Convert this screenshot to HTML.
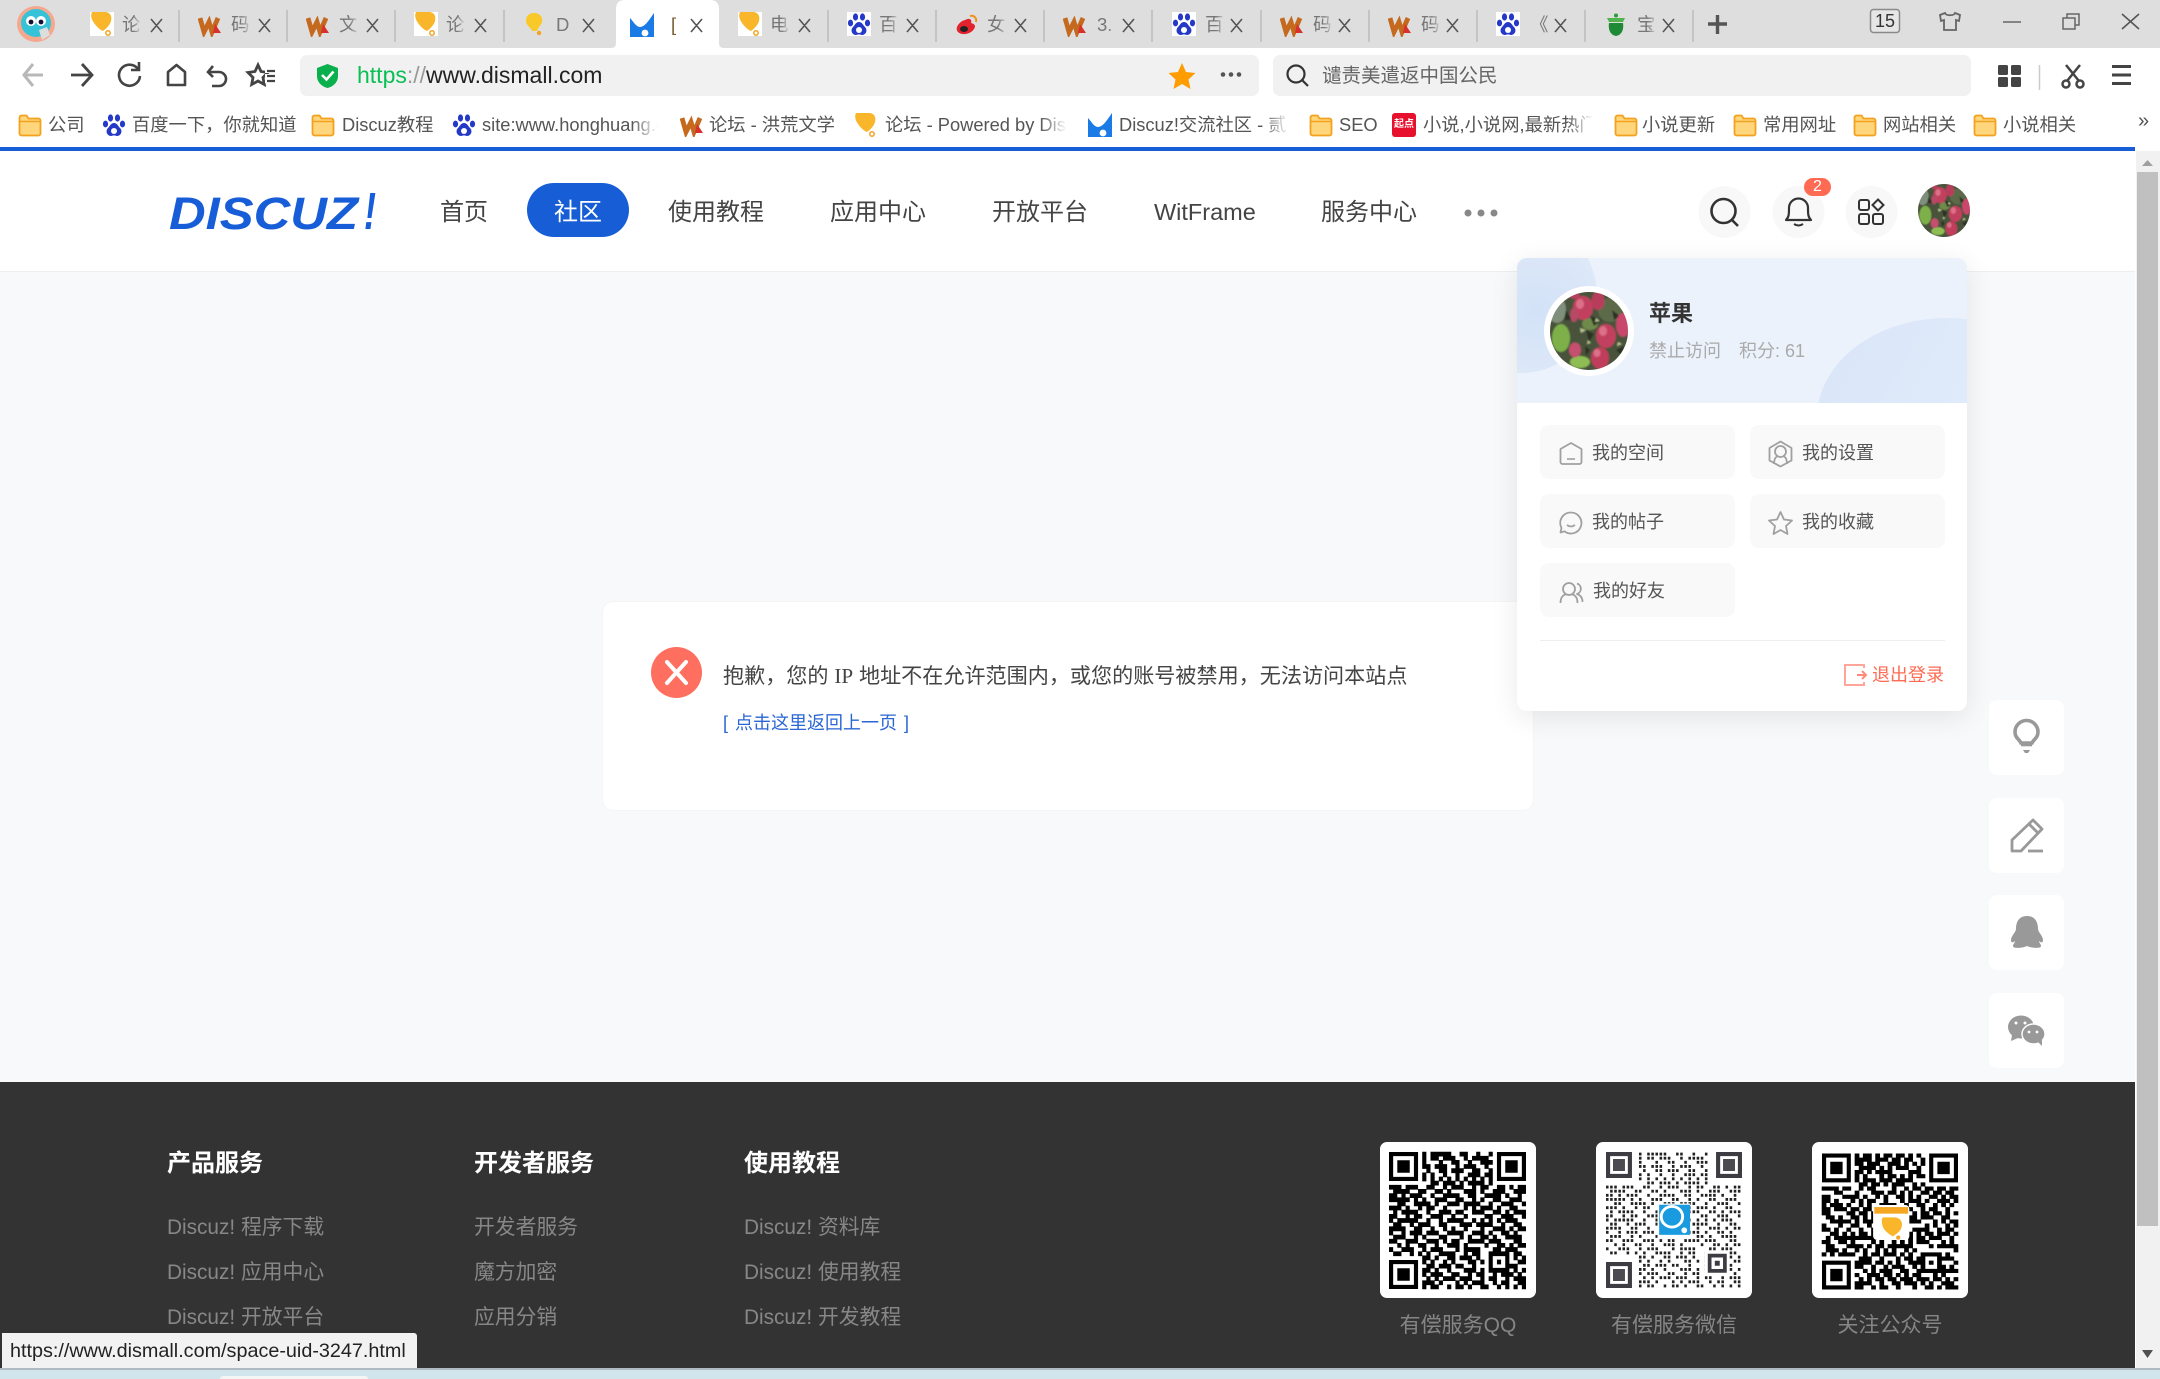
<!DOCTYPE html>
<html lang="zh-CN"><head><meta charset="utf-8"><title>Discuz!</title>
<style>
html,body{margin:0;padding:0;width:2160px;height:1379px;overflow:hidden;background:#fff}
body{position:relative;font-family:"Liberation Sans","Noto Sans CJK SC",sans-serif;color:#444}
.a{position:absolute;white-space:nowrap;line-height:30px;height:30px}
.b{position:absolute}
svg.b{overflow:visible}
svg.b.c{overflow:hidden;border-radius:50%}
.tt{font-size:18.500px;color:#777;width:20px;overflow:hidden;-webkit-mask-image:linear-gradient(90deg,#000 55%,transparent);mask-image:linear-gradient(90deg,#000 55%,transparent)}
.bm{font-size:18.300px;color:#555;top:110px}
.fade{overflow:hidden;-webkit-mask-image:linear-gradient(90deg,#000 85%,transparent);mask-image:linear-gradient(90deg,#000 85%,transparent)}
.nav{font-size:24px;top:198px;color:#444}
.btn{position:absolute;width:195px;height:54px;background:#f9f9f9;border-radius:9px}
.bt{font-size:18px;color:#555}
.ft{font-size:24px;font-weight:700;color:#fff;top:1149px}
.fl{font-size:20.800px;color:#878787}
.side{position:absolute;left:1989px;width:75px;height:75px;background:#fff;border-radius:8px}
.qr{position:absolute;top:1142px;width:156px;height:156px;background:#fff;border-radius:7px}
.cap{font-size:21px;color:#858585;top:1311px;width:156px;text-align:center}
</style></head><body>
<svg width="0" height="0" style="position:absolute">
<defs>
<filter id="soft" x="-5%" y="-5%" width="110%" height="110%"><feGaussianBlur stdDeviation=".7"/></filter>
<symbol id="i-bulb" viewBox="0 0 24 24"><rect width="24" height="24" fill="#fff"/><path d="M2 0h14c5 1 6 5 5 9-1 4-5 8-8 10-3-1-7-5-9-8C2 8 0 4 2 0z" fill="#f9b62a"/><circle cx="18" cy="21" r="2.2" fill="none" stroke="#f3a322" stroke-width="1.5"/></symbol>
<symbol id="i-bulb2" viewBox="0 0 24 24"><path d="M12 1c6 0 9 4 8 9-1 4-4 5-5 9h-5C9 15 4 14 4 9c0-5 3-8 8-8z" fill="#f9c92a"/><circle cx="17" cy="21" r="2.2" fill="#f3a322"/></symbol>
<symbol id="i-w" viewBox="0 0 24 24"><path d="M2 5l4 14 5-10 3 10 6-14" fill="none" stroke="#c4691e" stroke-width="4.800"/><path d="M17 11l6 9h-8z" fill="#d8302a"/></symbol>
<symbol id="i-bd" viewBox="0 0 24 24"><rect width="24" height="24" fill="#fff"/><g fill="#2539c8"><ellipse cx="8.5" cy="5" rx="2.6" ry="3.6"/><ellipse cx="15.5" cy="5" rx="2.6" ry="3.6"/><ellipse cx="3.5" cy="11" rx="2.6" ry="3.4"/><ellipse cx="20.5" cy="11" rx="2.6" ry="3.4"/><path d="M12 10c3 0 4 3 6 5 3 3 1 8-3 8-1 0-2-.6-3-.6s-2 .6-3 .6c-4 0-6-5-3-8 2-2 3-5 6-5z"/></g><circle cx="12" cy="18" r="3" fill="#fff"/></symbol>
<symbol id="i-dz" viewBox="0 0 24 24"><path d="M0 24V5c3 3 6 9 10 9 5 0 9-7 14-14v24z" fill="#1b7be6"/><circle cx="15" cy="20" r="3.4" fill="#fff"/></symbol>
<symbol id="i-wb" viewBox="0 0 24 24"><path d="M10 7c6-3 7 1 6 3 4 1 5 3 3 6-3 5-12 7-16 3C-1 15 5 8 10 7z" fill="#e2232e"/><ellipse cx="9" cy="16" rx="4" ry="3" fill="#222"/><path d="M15 3c4-1 7 2 6 6" fill="none" stroke="#f09020" stroke-width="2"/></symbol>
<symbol id="i-gr" viewBox="0 0 24 24"><circle cx="12" cy="3.5" r="2" fill="#2a9a3c"/><path d="M3 6h18l-2 4H5z" fill="#4fb34f"/><path d="M5 11h14c1 6-1 12-7 13-6-1-8-7-7-13z" fill="#1f8a34"/></symbol>
<symbol id="i-f" viewBox="0 0 24 24"><path d="M1.5 4.5a2 2 0 0 1 2-2h5l2 3h10a2 2 0 0 1 2 2v13a2 2 0 0 1-2 2h-17a2 2 0 0 1-2-2z" fill="#ffd67c" stroke="#f2a21e" stroke-width="1.8"/><path d="M1.5 8.5h21" stroke="#f2a21e" stroke-width="1.6"/></symbol>
<symbol id="i-ap" viewBox="10 12 78 78"><g filter="url(#soft)">
<rect x="0" y="0" width="100" height="100" fill="#49523a"/>
<ellipse cx="17" cy="30" rx="9" ry="13" fill="#7f8f7c"/><ellipse cx="70" cy="30" rx="12" ry="12" fill="#5d6b48"/>
<ellipse cx="21" cy="58" rx="9" ry="14" fill="#7db04a"/><ellipse cx="40" cy="82" rx="10" ry="6" fill="#8dbd52"/><ellipse cx="50" cy="44" rx="8" ry="6" fill="#6f8a4c"/>
<path d="M50 36l12 4-8 6zM46 50l8 4-5 8zM26 30l6 10-8 0zM72 30l8 6-6 4zM76 70l8-4-2 10zM45 66l5 4-4 6z" fill="#2c3224"/>
<path d="M56 38l4 3-5 1zM40 48l6 2-5 3zM78 62l4 2-5 2zM48 60l3 3-4 1z" fill="#b7c58f"/>
<ellipse cx="43" cy="28" rx="10" ry="12" fill="#c2415f"/><ellipse cx="58" cy="21" rx="6.500" ry="9" fill="#b83d5c"/><ellipse cx="83" cy="45" rx="7" ry="12" fill="#c8466a"/><ellipse cx="66" cy="56" rx="10" ry="12" fill="#c23f5e"/><ellipse cx="60" cy="78" rx="9" ry="11" fill="#c03c5c"/><ellipse cx="35" cy="70" rx="6" ry="7.5" fill="#c5506e"/><ellipse cx="34" cy="35" rx="4" ry="7" fill="#b54a66"/><ellipse cx="35" cy="16" rx="5" ry="3" fill="#b8405e"/>
<ellipse cx="40" cy="24" rx="4" ry="5" fill="#dc6f88"/><ellipse cx="63" cy="51" rx="4" ry="5" fill="#dc6f88"/><ellipse cx="57" cy="73" rx="3.500" ry="4" fill="#dc6f88"/></g></symbol>
<path id="qd" fill="none" d="M8 .5h1M10 .5h5M17 .5h2M21 .5h1M24 .5h1M8 1.5h1M10 1.5h2M13 1.5h3M18 1.5h1M20 1.5h4M8 2.5h1M12 2.5h1M15 2.5h2M19 2.5h1M22 2.5h3M8 3.5h2M11 3.5h3M16 3.5h1M18 3.5h3M23 3.5h1M9 4.5h1M12 4.5h2M15 4.5h3M20 4.5h2M24 4.5h1M8 5.5h1M10 5.5h1M13 5.5h1M16 5.5h1M19 5.5h3M23 5.5h2M8 6.5h1M10 6.5h1M12 6.5h1M14 6.5h1M16 6.5h1M18 6.5h1M20 6.5h1M22 6.5h1M24 6.5h1M10 7.5h2M13 7.5h3M17 7.5h1M19 7.5h4M24 7.5h1M0 8.5h3M4 8.5h2M6 8.5h1M9 8.5h2M13 8.5h1M15 8.5h3M20 8.5h1M22 8.5h2M26 8.5h2M29 8.5h1M31 8.5h2M1 9.5h4M7 9.5h2M11 9.5h2M14 9.5h1M18 9.5h3M22 9.5h1M25 9.5h3M30 9.5h3M0 10.5h2M3 10.5h1M5 10.5h3M10 10.5h1M13 10.5h4M19 10.5h2M23 10.5h4M28 10.5h1M31 10.5h1M0 11.5h5M6 11.5h1M8 11.5h1M11 11.5h3M16 11.5h2M20 11.5h1M22 11.5h1M25 11.5h2M29 11.5h3M2 12.5h2M6 12.5h4M11 12.5h1M14 12.5h3M18 12.5h4M24 12.5h1M27 12.5h3M32 12.5h1M0 13.5h3M4 13.5h1M7 13.5h1M9 13.5h2M13 13.5h1M18 13.5h1M20 13.5h1M22 13.5h3M26 13.5h1M29 13.5h2M1 14.5h1M3 14.5h4M9 14.5h1M12 14.5h3M16 14.5h2M20 14.5h3M25 14.5h2M28 14.5h1M30 14.5h3M0 15.5h2M4 15.5h1M6 15.5h2M10 15.5h3M15 15.5h1M18 15.5h1M23 15.5h2M27 15.5h3M32 15.5h1M0 16.5h1M2 16.5h5M9 16.5h1M12 16.5h1M14 16.5h4M20 16.5h1M22 16.5h1M24 16.5h1M26 16.5h1M28 16.5h3M1 17.5h2M5 17.5h1M7 17.5h3M12 17.5h2M17 17.5h3M21 17.5h4M27 17.5h1M30 17.5h2M0 18.5h4M6 18.5h2M10 18.5h1M13 18.5h1M15 18.5h1M18 18.5h1M22 18.5h1M25 18.5h3M29 18.5h1M31 18.5h2M0 19.5h1M3 19.5h1M5 19.5h3M9 19.5h3M14 19.5h4M20 19.5h3M24 19.5h1M27 19.5h2M30 19.5h1M1 20.5h3M6 20.5h1M8 20.5h1M12 20.5h2M17 20.5h1M19 20.5h1M22 20.5h2M25 20.5h1M28 20.5h4M0 21.5h2M4 21.5h3M9 21.5h3M13 21.5h1M15 21.5h2M19 21.5h4M24 21.5h3M30 21.5h2M2 22.5h1M4 22.5h1M7 22.5h2M11 22.5h1M14 22.5h3M18 22.5h1M23 22.5h1M26 22.5h2M29 22.5h1M31 22.5h2M0 23.5h1M3 23.5h3M8 23.5h1M10 23.5h3M16 23.5h1M18 23.5h4M25 23.5h2M28 23.5h3M1 24.5h2M5 24.5h1M7 24.5h1M9 24.5h1M12 24.5h4M18 24.5h1M20 24.5h2M24 24.5h5M30 24.5h2M8 25.5h2M11 25.5h1M14 25.5h2M17 25.5h3M21 25.5h1M24 25.5h1M28 25.5h1M30 25.5h1M32 25.5h1M8 26.5h1M10 26.5h1M13 26.5h1M15 26.5h1M19 26.5h2M22 26.5h1M24 26.5h1M26 26.5h1M28 26.5h1M31 26.5h2M9 27.5h2M12 27.5h3M16 27.5h2M20 27.5h1M24 27.5h1M28 27.5h3M8 28.5h2M11 28.5h1M14 28.5h1M18 28.5h3M22 28.5h1M24 28.5h5M30 28.5h1M32 28.5h1M8 29.5h1M10 29.5h3M15 29.5h2M19 29.5h1M21 29.5h2M25 29.5h1M27 29.5h3M31 29.5h1M9 30.5h1M11 30.5h1M13 30.5h3M17 30.5h3M22 30.5h1M24 30.5h2M28 30.5h1M30 30.5h3M8 31.5h3M12 31.5h1M16 31.5h1M18 31.5h1M20 31.5h3M25 31.5h1M27 31.5h2M31 31.5h2M8 32.5h1M10 32.5h2M14 32.5h1M16 32.5h2M19 32.5h1M22 32.5h2M26 32.5h1M28 32.5h1M30 32.5h1M32 32.5h1"/>
<path id="qf" fill-rule="evenodd" d="M0 0h7v7H0zM1 1v5h5V1zM2 2h3v3H2zM26 0h7v7h-7zM27 1v5h5V1zM28 2h3v3h-3zM0 26h7v7H0zM1 27v5h5v-5zM2 28h3v3H2z"/>
</defs></svg>

<!-- tab bar -->
<div class="b" style="left:0;top:0;width:2160px;height:48px;background:#dedede"></div>
<svg class="b" style="left:0;top:0" width="2160" height="48">
<ellipse cx="36" cy="24" rx="19" ry="18" fill="#f4a88e"/><ellipse cx="36" cy="23" rx="15" ry="14" fill="#36c3d8"/><circle cx="31" cy="21" r="5" fill="#fff"/><circle cx="41" cy="21" r="5" fill="#fff"/><circle cx="31" cy="22" r="2.4" fill="#113"/><circle cx="41" cy="22" r="2.4" fill="#113"/><path d="M39 30l8-3 3 8-8 5z" fill="#ddd"/>
<g stroke="#b9b9b9" stroke-width="1.4"><path d="M179 10v32M287 10v32M395 10v32M504 10v32M828 10v32M936 10v32M1044 10v32M1152 10v32M1261 10v32M1369 10v32M1477 10v32M1585 10v32M1693 10v32"/></g>
<path d="M611 48c4 0 5-2 5-6V9c0-6 3-9 9-9h85c6 0 9 3 9 9v33c0 4 1 6 5 6z" fill="#fff"/>
<use href="#i-bulb" x="90" y="12" width="24" height="24"/>
<use href="#i-w" x="198" y="13" width="24" height="24"/>
<use href="#i-w" x="306" y="13" width="24" height="24"/>
<use href="#i-bulb" x="414" y="12" width="24" height="24"/>
<use href="#i-bulb2" x="522" y="12" width="24" height="24"/>
<use href="#i-dz" x="630" y="13" width="24" height="24"/>
<use href="#i-bulb" x="738" y="12" width="24" height="24"/>
<use href="#i-bd" x="847" y="12" width="24" height="24"/>
<use href="#i-wb" x="955" y="13" width="24" height="24"/>
<use href="#i-w" x="1063" y="13" width="24" height="24"/>
<use href="#i-bd" x="1172" y="12" width="24" height="24"/>
<use href="#i-w" x="1280" y="13" width="24" height="24"/>
<use href="#i-w" x="1388" y="13" width="24" height="24"/>
<use href="#i-bd" x="1496" y="12" width="24" height="24"/>
<use href="#i-gr" x="1604" y="12" width="24" height="24"/>
<g stroke="#555" stroke-width="1.6" fill="none">
<path d="M151 19l11 13m0-13l-11 13M259 19l11 13m0-13l-11 13M367 19l11 13m0-13l-11 13M475 19l11 13m0-13l-11 13M583 19l11 13m0-13l-11 13M691 19l11 13m0-13l-11 13M799 19l11 13m0-13l-11 13M907 19l11 13m0-13l-11 13M1015 19l11 13m0-13l-11 13M1123 19l11 13m0-13l-11 13M1231 19l11 13m0-13l-11 13M1339 19l11 13m0-13l-11 13M1447 19l11 13m0-13l-11 13M1555 19l11 13m0-13l-11 13M1663 19l11 13m0-13l-11 13"/>
</g>
<path d="M1708 24h19M1717.500 15v19" stroke="#555" stroke-width="3.4"/>
<rect x="1870.500" y="9.500" width="29" height="23" rx="3" fill="#e6e6e6" stroke="#8a8a8a" stroke-width="1.5"/>
<path d="M1945 13l-5 2 1 6 3-1v10h12V20l3 1 1-6-5-2c-1 3-9 3-10 0z" fill="none" stroke="#666" stroke-width="1.8"/>
<path d="M2003 22h18" stroke="#666" stroke-width="1.5"/>
<path d="M2063 18h12v11h-12zM2067 18v-4h12v11h-4" fill="none" stroke="#666" stroke-width="1.5"/>
<path d="M2122 14l17 15m0-15l-17 15" stroke="#555" stroke-width="1.6"/>
</svg>
<span class="a" style="left:1875px;top:6px;font-size:18px;color:#333">15</span>
<span class="a tt" style="left:122px;top:10px">论</span><span class="a tt" style="left:231px;top:10px">码</span><span class="a tt" style="left:339px;top:10px">文</span><span class="a tt" style="left:446px;top:10px">论</span><span class="a tt" style="left:556px;top:10px">D</span><span class="a tt" style="left:671px;top:10px;color:#7a5a30">[</span><span class="a tt" style="left:770px;top:10px">电</span><span class="a tt" style="left:879px;top:10px">百</span><span class="a tt" style="left:987px;top:10px">女</span><span class="a tt" style="left:1097px;top:10px">3.</span><span class="a tt" style="left:1205px;top:10px">百</span><span class="a tt" style="left:1313px;top:10px">码</span><span class="a tt" style="left:1421px;top:10px">码</span><span class="a tt" style="left:1530px;top:10px;-webkit-mask-image:none;mask-image:none">《</span><span class="a tt" style="left:1637px;top:10px">宝</span>

<!-- toolbar -->
<div class="b" style="left:300px;top:55px;width:959px;height:41px;background:#f1f1f1;border-radius:7px"></div>
<div class="b" style="left:1273px;top:55px;width:698px;height:41px;background:#f1f1f1;border-radius:7px"></div>
<svg class="b" style="left:0;top:0" width="2160" height="146">
<path d="M33 64l-9 11 9 11M24 75h19" fill="none" stroke="#b8b8b8" stroke-width="3"/>
<path d="M82 64l10 11-10 11M71 75h21" fill="none" stroke="#444" stroke-width="2.800"/>
<path d="M138 69a10.500 10.500 0 1 0 2 7M139 62v8h-8" fill="none" stroke="#444" stroke-width="2.600"/>
<path d="M168 85V72l8.500-7 8.500 7v13z" fill="none" stroke="#444" stroke-width="2.600" stroke-linejoin="round"/>
<path d="M213 66l-5 6 5 5M208 72h11a7 7 0 0 1 0 14h-7" fill="none" stroke="#444" stroke-width="2.600"/>
<path d="M258 65l3 6.500 7 1-5 5 1.300 7-6.300-3.500-6.300 3.500 1.300-7-5-5 7-1z" fill="#fff" stroke="#444" stroke-width="2.800"/><path d="M265 71h10M265 76h10M265 81h10" stroke="#fff" stroke-width="4"/><path d="M267 71h8M267 76h8M267 81h8" stroke="#444" stroke-width="2.300"/>
<path d="M317 68l10.500-4 10.500 4v8c0 7-6 11-10.500 12-4.500-1-10.500-5-10.500-12z" fill="#0ab04b"/><path d="M322 75l4.500 4.500 7-8" fill="none" stroke="#fff" stroke-width="2.600"/>
<path d="M1182 63l4 9 9.500 1-7 6.500 2 9.500-8.500-5-8.500 5 2-9.500-7-6.500 9.500-1z" fill="#ff9c00"/>
<g fill="#555"><circle cx="1223" cy="74.500" r="2.300"/><circle cx="1231" cy="74.500" r="2.300"/><circle cx="1239" cy="74.500" r="2.300"/></g>
<circle cx="1296" cy="74" r="8.500" fill="none" stroke="#333" stroke-width="2.200"/><path d="M1302 80l6 6" stroke="#333" stroke-width="2.200"/>
<g fill="#444"><rect x="1998" y="65" width="10" height="10" rx="1.500"/><rect x="2011" y="65" width="10" height="10" rx="1.500"/><rect x="1998" y="77" width="10" height="10" rx="1.500"/><rect x="2011" y="77" width="10" height="10" rx="1.500"/></g>
<path d="M2039.500 65v25" stroke="#ccc" stroke-width="1.500"/>
<path d="M2066 65l13 16M2080 65l-13 16" stroke="#444" stroke-width="2.500"/><circle cx="2066" cy="84" r="3.500" fill="none" stroke="#444" stroke-width="2.500"/><circle cx="2080" cy="84" r="3.500" fill="none" stroke="#444" stroke-width="2.500"/>
<path d="M2112 66.500h19M2112 75h19M2112 83.500h19" stroke="#444" stroke-width="3"/>
<!-- bookmark icons -->
<use href="#i-f" x="18" y="113" width="24" height="24"/>
<use href="#i-bd" x="102" y="113" width="24" height="24"/>
<use href="#i-f" x="311" y="113" width="24" height="24"/>
<use href="#i-bd" x="452" y="113" width="24" height="24"/>
<use href="#i-w" x="680" y="113" width="24" height="24"/>
<use href="#i-bulb" x="854" y="113" width="24" height="24"/>
<use href="#i-dz" x="1088" y="113" width="24" height="24"/>
<use href="#i-f" x="1309" y="113" width="24" height="24"/>
<rect x="1392" y="113" width="24" height="24" rx="3" fill="#e8112d"/>
<use href="#i-f" x="1614" y="113" width="24" height="24"/>
<use href="#i-f" x="1733" y="113" width="24" height="24"/>
<use href="#i-f" x="1853" y="113" width="24" height="24"/>
<use href="#i-f" x="1973" y="113" width="24" height="24"/>
</svg>
<span class="a" style="left:357px;top:60px;font-size:23px;color:#222"><span style="color:#0abf53">https</span><span style="color:#999">://</span>www.dismall.com</span>
<span class="a" style="left:1322px;top:61px;font-size:19.500px;color:#666">谴责美遣返中国公民</span>
<span class="a bm" style="left:48px">公司</span>
<span class="a bm" style="left:132px">百度一下，你就知道</span>
<span class="a bm" style="left:342px">Discuz教程</span>
<span class="a bm fade" style="left:482px;width:176px">site:www.honghuang.com</span>
<span class="a bm" style="left:709px">论坛 - 洪荒文学</span>
<span class="a bm fade" style="left:885px;width:182px">论坛 - Powered by Discuz!</span>
<span class="a bm fade" style="left:1119px;width:170px">Discuz!交流社区 - 贰零</span>
<span class="a bm" style="left:1339px">SEO</span>
<span class="a" style="left:1394px;top:110px;font-size:10px;color:#fff;font-weight:700">起点</span>
<span class="a bm fade" style="left:1423px;width:170px">小说,小说网,最新热门小说</span>
<span class="a bm" style="left:1642px">小说更新</span>
<span class="a bm" style="left:1763px">常用网址</span>
<span class="a bm" style="left:1883px">网站相关</span>
<span class="a bm" style="left:2003px">小说相关</span>
<span class="a" style="left:2138px;top:106px;font-size:20px;color:#555">»</span>

<div class="b" style="left:0;top:147px;width:2135px;height:4px;background:#175dd6"></div>

<!-- page -->
<div class="b" style="left:0;top:151px;width:2135px;height:120px;background:#fff"></div>
<div class="b" style="left:0;top:271px;width:2135px;height:811px;background:#f8f9fa;border-top:1px solid #eee;box-sizing:border-box"></div>

<!-- logo -->
<svg class="b" style="left:160px;top:180px" width="230" height="60">
<text x="9" y="49" font-family="Liberation Sans" font-weight="700" font-style="italic" font-size="45" fill="#175dd8" textLength="189" lengthAdjust="spacingAndGlyphs">DISCUZ</text>
<text x="204" y="49" font-family="Liberation Sans" font-weight="700" font-style="italic" font-size="52" fill="#175dd8" textLength="12" lengthAdjust="spacingAndGlyphs">!</text>
</svg>

<span class="a nav" style="left:440px">首页</span>
<div class="b" style="left:527px;top:183px;width:102px;height:54px;border-radius:27px;background:#175dd6"></div>
<span class="a nav" style="left:554px;color:#fff">社区</span>
<span class="a nav" style="left:668px">使用教程</span>
<span class="a nav" style="left:830px">应用中心</span>
<span class="a nav" style="left:992px">开放平台</span>
<span class="a nav" style="left:1154px;font-size:23.500px;top:197px">WitFrame</span>
<span class="a nav" style="left:1321px">服务中心</span>

<svg class="b" style="left:0;top:0" width="2160" height="300">
<g fill="#888"><circle cx="1468" cy="213" r="3.500"/><circle cx="1481" cy="213" r="3.500"/><circle cx="1494" cy="213" r="3.500"/></g>
<g fill="#f8f8f8"><circle cx="1724.500" cy="212" r="26"/><circle cx="1798.500" cy="212" r="26"/><circle cx="1871.500" cy="212" r="26"/></g>
<circle cx="1723.500" cy="211" r="12" fill="none" stroke="#333" stroke-width="2.600"/><path d="M1732 220l6 6" stroke="#333" stroke-width="2.600"/>
<path d="M1786 220h25c-3-3-3-6-3-12a9.500 9.500 0 0 0-19 0c0 6 0 9-3 12z" fill="none" stroke="#333" stroke-width="2.200" stroke-linejoin="round"/><path d="M1794 224q4.500 3 9 0" fill="none" stroke="#333" stroke-width="2"/>
<g fill="none" stroke="#333" stroke-width="2"><rect x="1859" y="200" width="10" height="10" rx="2"/><rect x="1859" y="214" width="10" height="10" rx="2"/><rect x="1873" y="214" width="10" height="10" rx="2"/><path d="M1878 199.500l5.500 5.500-5.500 5.500-5.500-5.500z"/></g>
<rect x="1804" y="178" width="27" height="18" rx="9" fill="#ff6a52"/>
</svg>
<svg class="b c" style="left:1918px;top:184px" width="52" height="53"><use href="#i-ap" width="52" height="53"/></svg>
<span class="a" style="left:1813px;top:172px;font-size:16px;color:#fff">2</span>

<!-- error card -->
<div class="b" style="left:603px;top:602px;width:930px;height:208px;background:#fff;border-radius:10px;box-shadow:0 0 2px rgba(0,0,0,.05)"></div>
<svg class="b" style="left:651px;top:647px" width="51" height="51"><circle cx="25.500" cy="25.500" r="25.500" fill="#ff6f5f"/><path d="M16 15l19 21M35 15L16 36" stroke="#fff" stroke-width="4" stroke-linecap="round"/></svg>
<span class="a" style="left:723px;top:661px;font-size:21.100px;color:#444">抱歉，您的 <span style="font-family:'Liberation Serif'">IP</span> 地址不在允许范围内，或您的账号被禁用，无法访问本站点</span>
<span class="a" style="left:723px;top:708px;font-size:18px;color:#2a66d4;word-spacing:2px">[ 点击这里返回上一页 ]</span>

<!-- side buttons -->
<div class="side" style="top:700px"></div><div class="side" style="top:798px"></div><div class="side" style="top:895px"></div><div class="side" style="top:993px"></div>
<svg class="b" style="left:0;top:0" width="2160" height="1080">
<g fill="none" stroke="#999" stroke-width="3.600"><path d="M2021 743c-1-3-6-5-6-11a11.500 11.500 0 0 1 23 0c0 6-5 8-6 11z"/><path d="M2021 744.500h11" /></g><path d="M2023 750h7l-2 3h-3z" fill="#999"/>
<g fill="none" stroke="#999" stroke-width="2.800" stroke-linejoin="round"><path d="M2012 851v-11l21-20 9 9-21 22z"/><path d="M2029 824l9 9" /><path d="M2028 851h15"/></g>
<path d="M2027 916c8 0 11 6 11 13 0 3 5 7 5 11 0 3-2 3-4 1 0 2 2 3 2 5 0 3-10 2-14 0-4 2-14 3-14 0 0-2 2-3 2-5-2 2-4 2-4-1 0-4 5-8 5-11 0-7 3-13 11-13z" fill="#999"/>
<ellipse cx="2021" cy="1027" rx="13" ry="11.500" fill="#999"/><path d="M2012 1035l-1 6 7-3z" fill="#999"/><ellipse cx="2033.500" cy="1034" rx="11.500" ry="10" fill="#999" stroke="#fff" stroke-width="1.400"/><path d="M2038 1042l4 4 0-6z" fill="#999"/>
<g fill="#fff"><circle cx="2016" cy="1023" r="1.500"/><circle cx="2025" cy="1023" r="1.500"/><circle cx="2029" cy="1032" r="1.400"/><circle cx="2037" cy="1032" r="1.400"/></g>
</svg>

<!-- popup -->
<div class="b" style="left:1517px;top:258px;width:450px;height:453px;background:#fff;border-radius:10px;box-shadow:0 6px 28px rgba(0,0,0,.09);overflow:hidden">
<div class="b" style="left:0;top:0;width:450px;height:145px;background:#ebf2fb;overflow:hidden">
<div class="b" style="left:-70px;top:-40px;width:150px;height:155px;border-radius:50%;background:radial-gradient(circle at 60% 60%,#d3e2f7,#e6eefa)"></div>
<div class="b" style="left:300px;top:60px;width:260px;height:200px;border-radius:50%;background:linear-gradient(120deg,#d9e6f8,#e5eefb)"></div>
</div>
</div>
<div class="b" style="left:1544px;top:286px;width:90px;height:90px;border-radius:50%;background:#fff"></div>
<svg class="b c" style="left:1550px;top:292px" width="78" height="78"><use href="#i-ap" width="78" height="78"/></svg>
<span class="a" style="left:1649px;top:299px;font-size:22px;font-weight:700;color:#333">苹果</span>
<span class="a" style="left:1649px;top:336px;font-size:18px;color:#aaa">禁止访问</span>
<span class="a" style="left:1739px;top:336px;font-size:18px;color:#aaa">积分: 61</span>
<div class="btn" style="left:1540px;top:425px"></div><div class="btn" style="left:1750px;top:425px"></div>
<div class="btn" style="left:1540px;top:494px"></div><div class="btn" style="left:1750px;top:494px"></div>
<div class="btn" style="left:1540px;top:563px"></div>
<span class="a bt" style="left:1592px;top:438px">我的空间</span><span class="a bt" style="left:1802px;top:438px">我的设置</span>
<span class="a bt" style="left:1592px;top:507px">我的帖子</span><span class="a bt" style="left:1802px;top:507px">我的收藏</span>
<span class="a bt" style="left:1593px;top:576px">我的好友</span>
<div class="b" style="left:1540px;top:640px;width:405px;height:1px;background:#eee"></div>
<span class="a" style="left:1872px;top:660px;font-size:18px;color:#ff6a52">退出登录</span>
<svg class="b" style="left:0;top:0" width="2160" height="720">
<g fill="none" stroke="#a0a0a0" stroke-width="1.800" stroke-linejoin="round">
<path d="M1560.500 449l10.500-6 10.500 6v13a2 2 0 0 1-2 2h-17a2 2 0 0 1-2-2z"/><path d="M1567 459h8" stroke-width="1.600"/>
<path d="M1780.500 441.500l11 6.500v12.500l-11 6-11-6V448z"/><circle cx="1780.500" cy="451.500" r="5.500"/><path d="M1774 464c0-6 2-7 3-7.500m10 7.500c0-6-2-7-3-7.500"/>
<path d="M1571 512.500a10.500 10.500 0 1 1-6.500 18.800l-4 1.200 1-4.500a10.500 10.500 0 0 1 9.500-15.500z"/><path d="M1567 525q4 3 8 0"/>
<path d="M1780.500 512l3.500 7.500 8 1-6 5.500 1.500 8-7-4-7 4 1.500-8-6-5.500 8-1z"/>
<circle cx="1569" cy="589" r="6"/><path d="M1560.500 603c0-6 3-8 5-8.500m7 0c2 .5 5 2.500 5 8.500M1577 583.500a5.500 5.500 0 0 1 0 10.500c3 1 5.500 3 5.500 8"/>
</g>
<g fill="none" stroke="#ffa599" stroke-width="2"><path d="M1864 668v-3h-19v20h19v-3"/><path d="M1857 675h8m-3-4l4 4-4 4" stroke="#ff8a7a"/></g>
</svg>

<!-- footer -->
<div class="b" style="left:0;top:1082px;width:2135px;height:286px;background:#333"></div>
<span class="a ft" style="left:167px">产品服务</span><span class="a ft" style="left:474px">开发者服务</span><span class="a ft" style="left:744px">使用教程</span>
<span class="a fl" style="left:167px;top:1213px">Discuz! 程序下载</span><span class="a fl" style="left:167px;top:1258px">Discuz! 应用中心</span><span class="a fl" style="left:167px;top:1303px">Discuz! 开放平台</span>
<span class="a fl" style="left:474px;top:1213px">开发者服务</span><span class="a fl" style="left:474px;top:1258px">魔方加密</span><span class="a fl" style="left:474px;top:1303px">应用分销</span>
<span class="a fl" style="left:744px;top:1213px">Discuz! 资料库</span><span class="a fl" style="left:744px;top:1258px">Discuz! 使用教程</span><span class="a fl" style="left:744px;top:1303px">Discuz! 开发教程</span>

<div class="qr" style="left:1380px"></div><div class="qr" style="left:1596px"></div><div class="qr" style="left:1812px"></div>
<svg class="b" style="left:1389px;top:1152px" width="137" height="137" viewBox="0 0 33 33"><use href="#qd" stroke="#000" stroke-width="1.150"/><rect x="-.2" y="-.2" width="7.800" height="7.800" fill="#fff"/><rect x="25.400" y="-.2" width="7.800" height="7.800" fill="#fff"/><rect x="-.2" y="25.400" width="7.800" height="7.800" fill="#fff"/><use href="#qf" fill="#000"/></svg>
<svg class="b" style="left:1606px;top:1152px" width="136" height="136" viewBox="0 0 33 33">
<use href="#qd" stroke="#222" stroke-width=".7" stroke-dasharray=".62 .38"/>
<rect width="7.500" height="7.500" fill="#fff"/><rect x="25.500" width="7.500" height="7.500" fill="#fff"/><rect y="25.500" width="7.500" height="7.500" fill="#fff"/><rect x="24" y="24" width="6" height="6" fill="#fff"/><rect x="12.500" y="12.500" width="8" height="8.500" fill="#fff"/>
<path fill="#3c3c42" fill-rule="evenodd" d="M0 0h6.300v6.300H0zM1 1v4.300h4.300V1zM26.700 0H33v6.300h-6.300zM27.700 1v4.300H32V1zM0 26.700h6.300V33H0zM1 27.700V32h4.300v-4.300z"/>
<path fill="#4a4a50" d="M1.700 1.700h2.900v2.900H1.700zM28.400 1.700h2.900v2.900h-2.900zM1.700 28.400h2.900v2.900H1.700z"/>
<path fill="#3c3c42" fill-rule="evenodd" d="M24.700 24.700h4.600v4.600h-4.600zM25.600 25.600v2.800h2.800v-2.800zM26.400 26.400h1.200v1.200h-1.200z"/>
<rect x="12.900" y="12.800" width="7.500" height="7.300" fill="#1a9be0"/><ellipse cx="16" cy="15.700" rx="2.600" ry="2.500" fill="none" stroke="#fff" stroke-width=".7"/><circle cx="19" cy="19" r=".7" fill="#fff"/>
</svg>
<svg class="b" style="left:1822px;top:1153px" width="136" height="137" viewBox="0 0 33 33">
<g transform="matrix(0 1 1 0 0 0)"><use href="#qd" stroke="#000" stroke-width="1.150"/></g><rect x="-.2" y="-.2" width="7.800" height="7.800" fill="#fff"/><rect x="25.400" y="-.2" width="7.800" height="7.800" fill="#fff"/><rect x="-.2" y="25.400" width="7.800" height="7.800" fill="#fff"/><use href="#qf" fill="#000"/>
<rect x="12.400" y="12.500" width="8.800" height="8.500" rx="1" fill="#fff"/><rect x="12.700" y="13" width="8.200" height="1.600" fill="#f5a623"/>
<path d="M14.800 15.500h2.700c1.500 0 2.200 1.200 1.800 2.400-.3 1-1 1.500-2.100 2.200-.8-.4-2-1.300-2.400-2.200-.3-1-.5-2 0-2.400z" fill="#f9b62a"/><circle cx="18.500" cy="20.400" r=".5" fill="#f3a322"/>
</svg>
<span class="a cap" style="left:1380px">有偿服务QQ</span><span class="a cap" style="left:1596px">有偿服务微信</span><span class="a cap" style="left:1812px">关注公众号</span>

<!-- status bubble -->
<div class="b" style="left:2px;top:1333px;width:415px;height:35px;background:#f2f2f2;border-radius:0 3px 0 0"></div>
<span class="a" style="left:10px;top:1336px;font-size:19.800px;color:#222">https://www.dismall.com/space-uid-3247.html</span>

<!-- scrollbar -->
<div class="b" style="left:2136px;top:151px;width:24px;height:1217px;background:#f1f1f1"></div>
<div class="b" style="left:2137px;top:172px;width:21px;height:1054px;background:#c0c0c0"></div>
<svg class="b" style="left:2136px;top:151px" width="24" height="1217"><path d="M6 15l5.500-6 5.500 6z" fill="#a0a0a0"/><path d="M6 1199l5.500 8 5.500-8z" fill="#505050"/></svg>

<!-- bottom strip -->
<div class="b" style="left:0;top:1368px;width:2160px;height:11px;background:#d1e5ec;border-top:2px solid #aebcc2;box-sizing:border-box"></div>
<div class="b" style="left:220px;top:1376px;width:148px;height:3px;background:#f4f6f6;border-radius:3px 3px 0 0"></div>
</body></html>
